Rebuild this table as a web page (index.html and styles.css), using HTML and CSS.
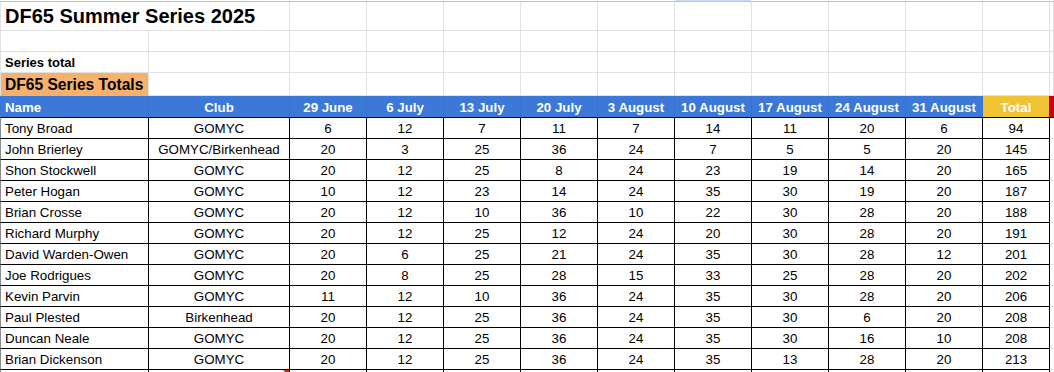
FILE: index.html
```html
<!DOCTYPE html>
<html>
<head>
<meta charset="utf-8">
<link rel="stylesheet" href="styles.css">
</head>
<body>
<div class="topbar"><span class="tb-gap"></span><span class="tb-sel"></span></div>
<div class="sheet">
  <!-- row 1 -->
  <div class="c a title span2">DF65 Summer Series 2025</div>
  <div class="c"></div><div class="c"></div><div class="c"></div><div class="c"></div><div class="c"></div><div class="c"></div><div class="c"></div><div class="c"></div><div class="c"></div><div class="c"></div><div class="c"></div>
  <!-- row 2 -->
  <div class="c a"></div><div class="c"></div><div class="c"></div><div class="c"></div><div class="c"></div><div class="c"></div><div class="c"></div><div class="c"></div><div class="c"></div><div class="c"></div><div class="c"></div><div class="c"></div><div class="c"></div>
  <!-- row 3 -->
  <div class="c a sub">Series total</div><div class="c"></div><div class="c"></div><div class="c"></div><div class="c"></div><div class="c"></div><div class="c"></div><div class="c"></div><div class="c"></div><div class="c"></div><div class="c"></div><div class="c"></div><div class="c"></div>
  <!-- row 4 -->
  <div class="c a orange">DF65 Series Totals</div><div class="c"></div><div class="c"></div><div class="c"></div><div class="c"></div><div class="c"></div><div class="c"></div><div class="c"></div><div class="c"></div><div class="c"></div><div class="c"></div><div class="c"></div><div class="c"></div>
  <!-- header -->
  <div class="h a">Name</div>
  <div class="h">Club</div>
  <div class="h">29 June</div>
  <div class="h">6 July</div>
  <div class="h">13 July</div>
  <div class="h">20 July</div>
  <div class="h">3 August</div>
  <div class="h">10 August</div>
  <div class="h">17 August</div>
  <div class="h">24 August</div>
  <div class="h">31 August</div>
  <div class="h total">Total</div>
  <div class="h red"></div>

  <div class="d a">Tony Broad</div><div class="d">GOMYC</div><div class="d">6</div><div class="d">12</div><div class="d">7</div><div class="d">11</div><div class="d">7</div><div class="d">14</div><div class="d">11</div><div class="d">20</div><div class="d">6</div><div class="d">94</div><div class="d m"></div>
  <div class="d a">John Brierley</div><div class="d">GOMYC/Birkenhead</div><div class="d">20</div><div class="d">3</div><div class="d">25</div><div class="d">36</div><div class="d">24</div><div class="d">7</div><div class="d">5</div><div class="d">5</div><div class="d">20</div><div class="d">145</div><div class="d m"></div>
  <div class="d a">Shon Stockwell</div><div class="d">GOMYC</div><div class="d">20</div><div class="d">12</div><div class="d">25</div><div class="d">8</div><div class="d">24</div><div class="d">23</div><div class="d">19</div><div class="d">14</div><div class="d">20</div><div class="d">165</div><div class="d m"></div>
  <div class="d a">Peter Hogan</div><div class="d">GOMYC</div><div class="d">10</div><div class="d">12</div><div class="d">23</div><div class="d">14</div><div class="d">24</div><div class="d">35</div><div class="d">30</div><div class="d">19</div><div class="d">20</div><div class="d">187</div><div class="d m"></div>
  <div class="d a">Brian Crosse</div><div class="d">GOMYC</div><div class="d">20</div><div class="d">12</div><div class="d">10</div><div class="d">36</div><div class="d">10</div><div class="d">22</div><div class="d">30</div><div class="d">28</div><div class="d">20</div><div class="d">188</div><div class="d m"></div>
  <div class="d a">Richard Murphy</div><div class="d">GOMYC</div><div class="d">20</div><div class="d">12</div><div class="d">25</div><div class="d">12</div><div class="d">24</div><div class="d">20</div><div class="d">30</div><div class="d">28</div><div class="d">20</div><div class="d">191</div><div class="d m"></div>
  <div class="d a">David Warden-Owen</div><div class="d">GOMYC</div><div class="d">20</div><div class="d">6</div><div class="d">25</div><div class="d">21</div><div class="d">24</div><div class="d">35</div><div class="d">30</div><div class="d">28</div><div class="d">12</div><div class="d">201</div><div class="d m"></div>
  <div class="d a">Joe Rodrigues</div><div class="d">GOMYC</div><div class="d">20</div><div class="d">8</div><div class="d">25</div><div class="d">28</div><div class="d">15</div><div class="d">33</div><div class="d">25</div><div class="d">28</div><div class="d">20</div><div class="d">202</div><div class="d m"></div>
  <div class="d a">Kevin Parvin</div><div class="d">GOMYC</div><div class="d">11</div><div class="d">12</div><div class="d">10</div><div class="d">36</div><div class="d">24</div><div class="d">35</div><div class="d">30</div><div class="d">28</div><div class="d">20</div><div class="d">206</div><div class="d m"></div>
  <div class="d a">Paul Plested</div><div class="d">Birkenhead</div><div class="d">20</div><div class="d">12</div><div class="d">25</div><div class="d">36</div><div class="d">24</div><div class="d">35</div><div class="d">30</div><div class="d">6</div><div class="d">20</div><div class="d">208</div><div class="d m"></div>
  <div class="d a">Duncan Neale</div><div class="d">GOMYC</div><div class="d">20</div><div class="d">12</div><div class="d">25</div><div class="d">36</div><div class="d">24</div><div class="d">35</div><div class="d">30</div><div class="d">16</div><div class="d">10</div><div class="d">208</div><div class="d m"></div>
  <div class="d a">Brian Dickenson</div><div class="d">GOMYC</div><div class="d">20</div><div class="d">12</div><div class="d">25</div><div class="d">36</div><div class="d">24</div><div class="d">35</div><div class="d">13</div><div class="d">28</div><div class="d">20</div><div class="d">213</div><div class="d m"></div>

  <div class="d a"></div><div class="d note"></div><div class="d"></div><div class="d"></div><div class="d"></div><div class="d"></div><div class="d"></div><div class="d"></div><div class="d"></div><div class="d"></div><div class="d"></div><div class="d"></div><div class="d m"></div>
</div>
</body>
</html>
```
FILE: styles.css
```css
html, body {
  margin: 0;
  padding: 0;
  overflow: hidden;
  background: #ffffff;
}

body {
  font-family: "Liberation Sans", Arial, sans-serif;
  color: #000000;
}

.topbar {
  display: flex;
  height: 1px;
}

.tb-gap {
  width: 675px;
}

.tb-sel {
  width: 76px;
  background: #c9daf8;
}

.sheet {
  display: grid;
  grid-template-columns: 149px 141px repeat(9, 77px) 67px 1fr;
  grid-template-rows: 29px 21px 21px 23px 22px repeat(13, 21px);
  border-top: 1px solid #c4c4c4;
  width: 1054px;
}

.c, .h, .d {
  box-sizing: border-box;
  border-right: 1px solid #e1e1e1;
  border-bottom: 1px solid #e1e1e1;
  white-space: nowrap;
  overflow: visible;
  text-align: center;
  font-size: 13.33px;
  line-height: 20px;
  padding-top: 1px;
}

.a {
  border-left: 1px solid #e1e1e1;
  text-align: left;
  padding-left: 4px;
}

.span2 {
  grid-column: span 2;
}

.title {
  font-size: 20px;
  font-weight: bold;
  line-height: 28px;
  padding-top: 0;
}

.sub {
  font-weight: bold;
  font-size: 13px;
}

.orange {
  background: #f6b26b;
  border-bottom-color: #f6b26b;
  font-weight: bold;
  font-size: 15.6px;
  line-height: 22px;
}

.h {
  background: #3c78d8;
  color: #ffffff;
  font-weight: bold;
  font-size: 13.3px;
  line-height: 21px;
  border-right-color: #3a73cf;
  border-bottom-color: #000000;
}

.h.a {
  border-left-color: #3c78d8;
}

.h.total {
  background: #f1c232;
  border-right-color: #cc0000;
}

.h.red {
  background: #cc0000;
  border-right: none;
}

.d {
  border-right-color: #000000;
  border-bottom-color: #000000;
}

.d.a {
  border-left-color: #8a8a8a;
  padding-left: 4px;
}

.d.m {
  border-right: none;
  border-bottom-color: #e1e1e1;
}

.note {
  position: relative;
}

.note::after {
  content: "";
  position: absolute;
  top: 0;
  right: 0;
  width: 0;
  height: 0;
  border-top: 6px solid #e0191b;
  border-left: 6px solid transparent;
}
```
